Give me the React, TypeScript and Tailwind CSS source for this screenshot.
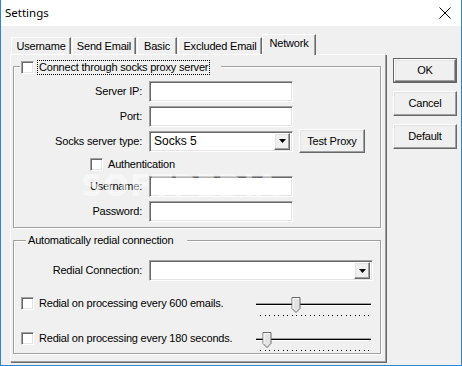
import React from 'react';

const sunken =
  'bg-white border border-t-[#a0a0a0] border-l-[#a0a0a0] border-r-white border-b-white shadow-[inset_1px_1px_0_#696969,inset_-1px_-1px_0_#e3e3e3]';
const raised =
  'bg-[#f0f0f0] border border-t-white border-l-white border-r-[#696969] border-b-[#696969] shadow-[inset_-1px_-1px_0_#a0a0a0,inset_1px_1px_0_#e3e3e3]';

function CheckBox() {
  return <div className={`w-[13px] h-[13px] shrink-0 ${sunken}`} />;
}

function TextField({ width = 'w-[144px]' }: { width?: string }) {
  return <div className={`h-[21px] ${width} ${sunken}`} />;
}

function DropDown({ width, value }: { width: string; value?: string }) {
  return (
    <div className={`h-[21px] ${width} ${sunken} flex items-center justify-between pl-[4px] pr-[2px]`}>
      <span className="text-[12px] tracking-normal">{value}</span>
      <div className={`w-[16px] h-[17px] ${raised} flex items-center justify-center`}>
        <svg width="7" height="4" viewBox="0 0 7 4">
          <polygon points="0,0 7,0 3.5,4" fill="#000" />
        </svg>
      </div>
    </div>
  );
}

function Label({ children }: { children: React.ReactNode }) {
  return <div className="w-[128px] text-right whitespace-nowrap leading-[13px]">{children}</div>;
}

// trackbar drawing: track, thumb and tick dots
function Slider({ thumb }: { thumb: number }) {
  const dots = Array.from({ length: 25 }, (_, i) => 6 + i * 4.5);
  return (
    <svg width="120" height="20" viewBox="0 0 120 20" className="shrink-0">
      <line x1="2" y1="6.5" x2="117" y2="6.5" stroke="#a0a0a0" />
      <line x1="2" y1="7.5" x2="117" y2="7.5" stroke="#000" />
      <line x1="2" y1="8.5" x2="117" y2="8.5" stroke="#ffffff" />
      <polygon
        points={`${thumb},0.5 ${thumb + 8},0.5 ${thumb + 8},11.5 ${thumb + 4},15.5 ${thumb},11.5`}
        fill="#e3e3e3"
        stroke="#696969"
      />
      <polyline
        points={`${thumb + 1},12 ${thumb + 1},1.5 ${thumb + 7},1.5`}
        fill="none"
        stroke="#ffffff"
      />
      {dots.map((x) => (
        <rect key={x} x={Math.round(x)} y="18" width="1" height="1" fill="#000" />
      ))}
    </svg>
  );
}

function Tab({ label, width, active }: { label: string; width: string; active?: boolean }) {
  return (
    <div
      className={`${width} flex items-center justify-center border-t border-l border-r border-t-white border-l-white border-r-[#696969] shadow-[inset_-1px_0_0_#a0a0a0] ${
        active ? 'h-[21px] -mb-px relative z-10 bg-[#f0f0f0] pb-[4px]' : 'h-[17px]'
      }`}
    >
      {label}
    </div>
  );
}

function Button({ label, isDefault }: { label: string; isDefault?: boolean }) {
  if (isDefault) {
    return (
      <div className="w-[64px] h-[25px] border border-[#646464]">
        <div className={`w-full h-full ${raised} flex items-center justify-center`}>{label}</div>
      </div>
    );
  }
  return <div className={`w-[64px] h-[25px] ${raised} flex items-center justify-center`}>{label}</div>;
}

export default function App() {
  return (
    <div className="relative w-[462px] h-[366px] flex flex-col bg-[#f0f0f0] border-x border-b border-[#2b86d9] font-['Liberation_Sans',Arial,sans-serif] text-[11px] tracking-[-0.2px] text-black overflow-hidden">
      {/* Title bar */}
      <div className="h-[26px] shrink-0 bg-white flex items-center justify-between pl-[4px] pr-[10px]">
        <span className="font-['Noto_Sans',sans-serif] text-[11.5px] tracking-normal">Settings</span>
        <svg width="12" height="12" viewBox="0 0 12 12">
          <path d="M0.5 0.5 L11.5 11.5 M11.5 0.5 L0.5 11.5" stroke="#000" strokeWidth="1" />
        </svg>
      </div>

      <div className="flex pl-[9px] pt-[8px]">
        {/* Tab control */}
        <div className="flex flex-col">
          <div className="h-[20px] flex items-end pl-[1px]">
            <Tab label="Username" width="w-[60px]" />
            <div className="ml-[1px]" />
            <Tab label="Send Email" width="w-[64px]" />
            <div className="ml-[1px]" />
            <Tab label="Basic" width="w-[40px]" />
            <div className="ml-[1px]" />
            <Tab label="Excluded Email" width="w-[84px]" />
            <Tab label="Network" width="w-[54px]" active />
          </div>

          <div className="w-[376px] h-[308px] border border-t-white border-l-white border-r-[#a0a0a0] border-b-[#a0a0a0] shadow-[1px_1px_0_#696969] flex flex-col pl-[2px] pt-[11px]">
            {/* Proxy group */}
            <div className="relative w-[368px] h-[162px] border border-[#a0a0a0] shadow-[1px_1px_0_white,inset_1px_1px_0_white] flex flex-col">
              <div className="absolute left-[6px] top-[-7px] bg-[#f0f0f0] flex items-center pl-[1px] pr-[11px]">
                <CheckBox />
                <div className="ml-[3px] border border-dotted border-black px-[1px] leading-[13px] whitespace-nowrap">
                  Connect through socks proxy server
                </div>
              </div>

              <div className="flex items-center mt-[14px]">
                <Label>Server IP:</Label>
                <div className="ml-[7px]"><TextField /></div>
              </div>
              <div className="flex items-center mt-[4px]">
                <Label>Port:</Label>
                <div className="ml-[7px]"><TextField /></div>
              </div>
              <div className="flex items-center mt-[2px] h-[24px]">
                <Label>Socks server type:</Label>
                <div className="ml-[7px]"><DropDown width="w-[144px]" value="Socks 5" /></div>
                <div className={`ml-[6px] w-[66px] h-[24px] ${raised} flex items-center justify-center`}>
                  Test Proxy
                </div>
              </div>
              <div className="flex items-center mt-[5px] ml-[76px]">
                <CheckBox />
                <span className="ml-[5px] leading-[13px]">Authentication</span>
              </div>
              <div className="flex items-center mt-[5px]">
                <Label>Username:</Label>
                <div className="ml-[7px]"><TextField /></div>
              </div>
              <div className="flex items-center mt-[4px]">
                <Label>Password:</Label>
                <div className="ml-[7px]"><TextField /></div>
              </div>
            </div>

            {/* Redial group */}
            <div className="relative mt-[12px] w-[368px] h-[114px] border border-[#a0a0a0] shadow-[1px_1px_0_white,inset_1px_1px_0_white] flex flex-col">
              <div className="absolute left-[12px] top-[-8px] bg-[#f0f0f0] pl-[2px] pr-[14px] leading-[14px] whitespace-nowrap">
                Automatically redial connection
              </div>

              <div className="flex items-center mt-[19px]">
                <Label>Redial Connection:</Label>
                <div className="ml-[7px]"><DropDown width="w-[224px]" /></div>
              </div>

              <div className="flex items-start mt-[16px]">
                <div className="w-[240px] flex items-center pl-[7px]">
                  <CheckBox />
                  <span className="ml-[5px] leading-[13px] whitespace-nowrap">
                    Redial on processing every 600 emails.
                  </span>
                </div>
                <Slider thumb={38} />
              </div>

              <div className="flex items-start mt-[15px]">
                <div className="w-[240px] flex items-center pl-[7px]">
                  <CheckBox />
                  <span className="ml-[5px] leading-[13px] whitespace-nowrap">
                    Redial on processing every 180 seconds.
                  </span>
                </div>
                <Slider thumb={9} />
              </div>
            </div>
          </div>
        </div>

        {/* Dialog buttons */}
        <div className="ml-[7px] mt-[24px] flex flex-col gap-[8px]">
          <Button label="OK" isDefault />
          <Button label="Cancel" />
          <Button label="Default" />
        </div>
      </div>

      {/* watermark */}
      <div className="absolute left-[80px] top-[163px] text-[30px] font-bold text-white/50 font-['DejaVu_Sans',sans-serif] tracking-[1px] pointer-events-none select-none">
        SOFTPEDIA
      </div>
    </div>
  );
}
